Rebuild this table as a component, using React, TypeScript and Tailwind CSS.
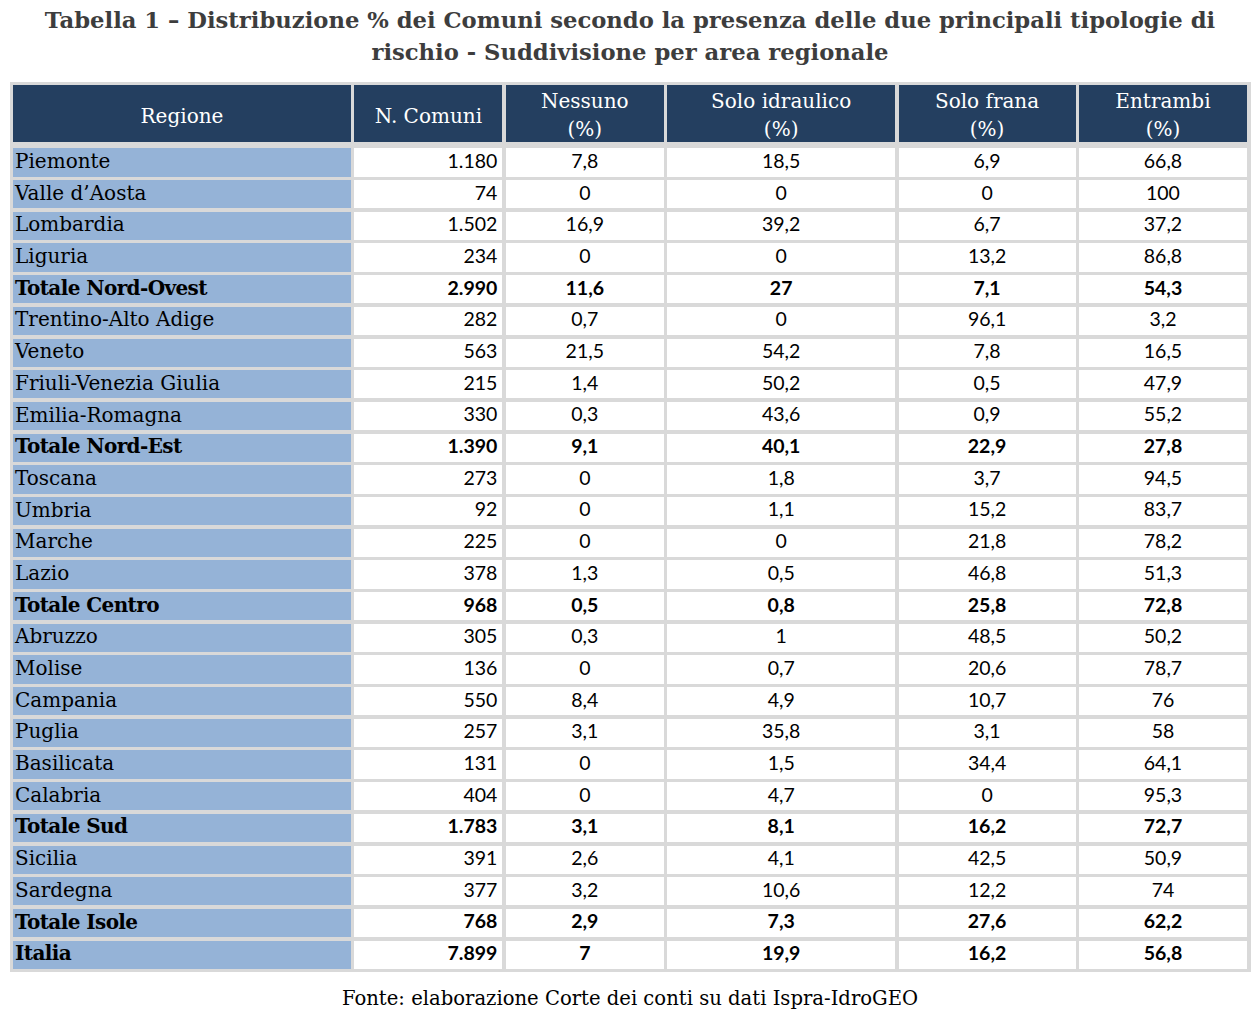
type Row = {
  name: string;
  comuni: string;
  values: string[];
  total?: boolean;
};

const rows: Row[] = [
  { name: "Piemonte", comuni: "1.180", values: ["7,8", "18,5", "6,9", "66,8"] },
  { name: "Valle d’Aosta", comuni: "74", values: ["0", "0", "0", "100"] },
  { name: "Lombardia", comuni: "1.502", values: ["16,9", "39,2", "6,7", "37,2"] },
  { name: "Liguria", comuni: "234", values: ["0", "0", "13,2", "86,8"] },
  { name: "Totale Nord-Ovest", comuni: "2.990", values: ["11,6", "27", "7,1", "54,3"], total: true },
  { name: "Trentino-Alto Adige", comuni: "282", values: ["0,7", "0", "96,1", "3,2"] },
  { name: "Veneto", comuni: "563", values: ["21,5", "54,2", "7,8", "16,5"] },
  { name: "Friuli-Venezia Giulia", comuni: "215", values: ["1,4", "50,2", "0,5", "47,9"] },
  { name: "Emilia-Romagna", comuni: "330", values: ["0,3", "43,6", "0,9", "55,2"] },
  { name: "Totale Nord-Est", comuni: "1.390", values: ["9,1", "40,1", "22,9", "27,8"], total: true },
  { name: "Toscana", comuni: "273", values: ["0", "1,8", "3,7", "94,5"] },
  { name: "Umbria", comuni: "92", values: ["0", "1,1", "15,2", "83,7"] },
  { name: "Marche", comuni: "225", values: ["0", "0", "21,8", "78,2"] },
  { name: "Lazio", comuni: "378", values: ["1,3", "0,5", "46,8", "51,3"] },
  { name: "Totale Centro", comuni: "968", values: ["0,5", "0,8", "25,8", "72,8"], total: true },
  { name: "Abruzzo", comuni: "305", values: ["0,3", "1", "48,5", "50,2"] },
  { name: "Molise", comuni: "136", values: ["0", "0,7", "20,6", "78,7"] },
  { name: "Campania", comuni: "550", values: ["8,4", "4,9", "10,7", "76"] },
  { name: "Puglia", comuni: "257", values: ["3,1", "35,8", "3,1", "58"] },
  { name: "Basilicata", comuni: "131", values: ["0", "1,5", "34,4", "64,1"] },
  { name: "Calabria", comuni: "404", values: ["0", "4,7", "0", "95,3"] },
  { name: "Totale Sud", comuni: "1.783", values: ["3,1", "8,1", "16,2", "72,7"], total: true },
  { name: "Sicilia", comuni: "391", values: ["2,6", "4,1", "42,5", "50,9"] },
  { name: "Sardegna", comuni: "377", values: ["3,2", "10,6", "12,2", "74"] },
  { name: "Totale Isole", comuni: "768", values: ["2,9", "7,3", "27,6", "62,2"], total: true },
  { name: "Italia", comuni: "7.899", values: ["7", "19,9", "16,2", "56,8"], total: true },
];

const serif = "font-['DejaVu_Serif',serif]";
const num = "font-['Lato',sans-serif]";

export default function App() {
  return (
    <div className="w-[1260px] h-[1011px] bg-white">
      <h1 className={`pt-[4px] text-center text-[22.7px] leading-[32px] font-bold text-[#3d3d3d] ${serif}`}>
        Tabella 1 – Distribuzione % dei Comuni secondo la presenza delle due principali tipologie di
        <br />
        rischio - Suddivisione per area regionale
      </h1>

      <div className="ml-[10px] mt-[14px] w-[1241px] bg-[#d9d9d9] p-[3px]">
        <div className="grid grid-cols-[338px_148px_158px_228px_177px_168px] gap-[3.4px] auto-rows-[28.3px]">
          {/* intestazione */}
          <div className={`row-span-2 h-[57px] bg-[#243f60] text-white flex items-center justify-center pt-[4px] text-[20px] ${serif}`}>
            Regione
          </div>
          <div className={`row-span-2 h-[57px] bg-[#243f60] text-white flex items-center justify-center pt-[4px] text-[20px] ${serif}`}>
            N. Comuni
          </div>
          {["Nessuno", "Solo idraulico", "Solo frana", "Entrambi"].map((h) => (
            <div
              key={h}
              className={`row-span-2 h-[57px] bg-[#243f60] text-white flex flex-col items-center justify-center pt-[3px] text-[20px] leading-[28px] ${serif}`}
            >
              <span>{h}</span>
              <span>(%)</span>
            </div>
          ))}

          {rows.map((r) => (
            <div key={r.name} className="contents">
              <div
                className={`bg-[#95b3d7] text-black pl-[2px] pb-[3px] flex items-center text-[20px] ${serif} ${
                  r.total ? "font-bold tracking-[-0.6px]" : ""
                }`}
              >
                {r.name}
              </div>
              <div
                className={`bg-white text-black pr-[5px] pb-[4px] flex items-center justify-end text-[19.5px] ${num} ${
                  r.total ? "font-bold" : ""
                }`}
              >
                {r.comuni}
              </div>
              {r.values.map((v, i) => (
                <div
                  key={i}
                  className={`bg-white text-black pb-[4px] flex items-center justify-center text-[19.5px] ${num} ${
                    r.total ? "font-bold" : ""
                  }`}
                >
                  {v}
                </div>
              ))}
            </div>
          ))}
        </div>
      </div>

      <p className={`mt-[12px] text-center text-[19.6px] text-black ${serif}`}>
        Fonte: elaborazione Corte dei conti su dati Ispra-IdroGEO
      </p>
    </div>
  );
}
